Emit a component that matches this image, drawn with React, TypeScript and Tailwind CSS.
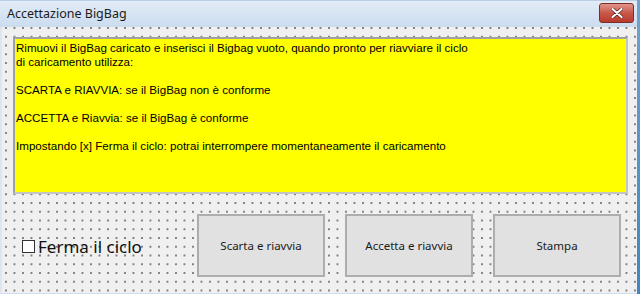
import React from "react";

const dots =
  "bg-[#f0f0f0] bg-[radial-gradient(circle_at_1px_1px,#7a7a7a_0.7px,transparent_0.95px)] bg-[length:8.5px_8.75px] bg-[position:3px_0px]";

const FormButton: React.FC<{ label: string }> = ({ label }) => (
  <div className="w-[128px] h-[63px] flex items-center justify-center bg-[#e1e1e1] border-2 border-[#adadad] text-[11.5px] text-[#1a1a1a] font-['Noto_Sans',sans-serif]">
    {label}
  </div>
);

export default function App() {
  return (
    <div className="w-[640px] h-[294px] flex overflow-hidden bg-[#f0f0f0]">
      <div className="w-[637px] flex flex-col">
        {/* Title bar */}
        <div className="h-[27px] flex items-center justify-between pl-[7px] pr-[3px] bg-gradient-to-b from-[#e3ecf7] to-[#cbdcef] border-t border-[#b9cde4]">
          <span className="text-[12.5px] text-[#1b1b1b] font-['Noto_Sans',sans-serif] leading-none">
            Accettazione BigBag
          </span>
          <div className="w-[35px] h-[20px] mb-[3px] rounded-[3px] border border-[#7a2f2a] bg-gradient-to-b from-[#e0948a] via-[#c9574b] to-[#b83a2e] flex items-center justify-center">
            <svg width="12" height="10" viewBox="0 0 12 10">
              <path d="M1.5 1 L10.5 9 M10.5 1 L1.5 9" stroke="#5a1a14" strokeWidth="3.4" strokeLinecap="round" />
              <path d="M1.5 1 L10.5 9 M10.5 1 L1.5 9" stroke="#ffffff" strokeWidth="2.2" strokeLinecap="round" />
            </svg>
          </div>
        </div>

        {/* Form body with designer grid */}
        <div className={`flex-1 flex flex-col pt-[10px] pl-[11px] border-l-2 border-[#dde6f0] border-b border-b-[#cfdff0] ${dots}`}>
          <div className="w-[615px] h-[157px] bg-[#ffff00] border-2 border-[#a0a0a0] border-b-[#c4c4c4] border-r-[#c4c4c4] pl-[1px] pt-[2px] text-[11.6px] leading-[14px] text-black font-['Liberation_Sans',sans-serif]">
            <p>Rimuovi il BigBag caricato e inserisci il Bigbag vuoto, quando pronto per riavviare il ciclo</p>
            <p>di caricamento utilizza:</p>
            <p className="mt-[14px]">SCARTA e RIAVVIA: se il BigBag non è conforme</p>
            <p className="mt-[14px]">ACCETTA e Riavvia: se il BigBag è conforme</p>
            <p className="mt-[14px]">Impostando [x] Ferma il ciclo: potrai interrompere momentaneamente il caricamento</p>
          </div>

          <div className="flex items-center mt-[20px]">
            <div className="w-[184px] flex items-center pl-[9px] pt-[2px]">
              <div className="w-[13px] h-[13px] bg-white border border-[#333333] mr-[3px]" />
              <span className="text-[17px] leading-none text-[#111] font-['Noto_Sans',sans-serif]">Ferma il ciclo</span>
            </div>
            <div className="flex gap-[20px]">
              <FormButton label="Scarta e riavvia" />
              <FormButton label="Accetta e riavvia" />
              <FormButton label="Stampa" />
            </div>
          </div>
        </div>
      </div>
      <div className="w-[3px] bg-gradient-to-b from-[#6fa2cf] to-[#3f86c2]" />
    </div>
  );
}
